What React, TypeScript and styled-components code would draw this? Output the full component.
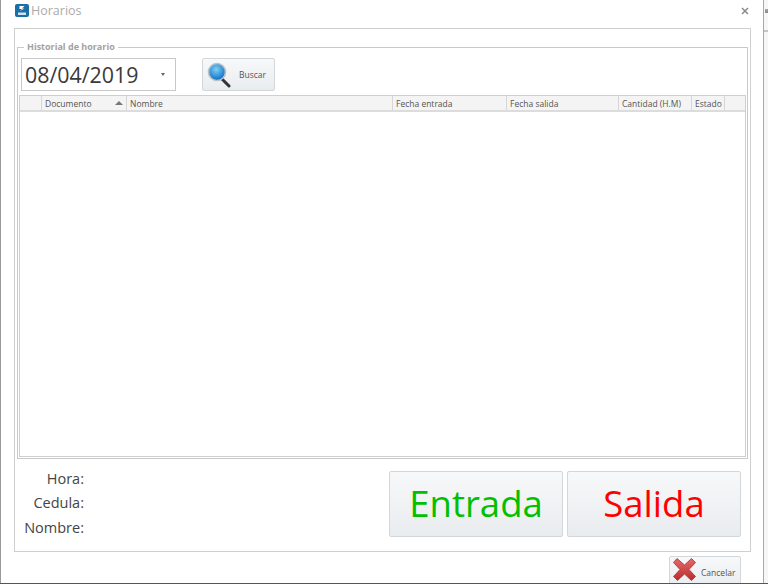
import React from "react";
import styled, { createGlobalStyle } from "styled-components";

const Global = createGlobalStyle`
  html, body { margin: 0; padding: 0; background: #fff; }
  body { font-family: "Open Sans", "Liberation Sans", sans-serif; }
  #root { width: 768px; height: 584px; overflow: hidden; }
`;

const Screen = styled.div`
  width: 768px;
  height: 584px;
  display: flex;
  background: #f6f6f6;
  border-bottom: 1px solid #555;
  box-sizing: border-box;
`;
const Win = styled.div`
  width: 764px;
  height: 583px;
  flex: none;
  box-sizing: border-box;
  background: #fff;
  border-left: 1px solid #9a9a9a;
  border-right: 1px solid #a8a8a8;
  display: flex;
  flex-direction: column;
  padding: 0 10px 0 13px;
  overflow: hidden;
`;
const Side = styled.div`
  flex: 1;
  display: flex;
  flex-direction: column;
  padding-top: 9px;
  gap: 17px;
`;
const SideGlyph = styled.span`
  display: block;
  width: 3px;
  height: 4px;
  margin-left: 1px;
  background: linear-gradient(#d9a23c, #5f8fc0);
`;
const SideLine = styled.span`
  display: block;
  height: 2px;
  background: #c4c4c4;
`;
const TitleBar = styled.div`
  height: 28px;
  flex: none;
  display: flex;
  align-items: center;
  gap: 2px;
  padding: 0 0 7px 1px;
  box-sizing: border-box;
`;
const Title = styled.span`
  font-family: "Open Sans", sans-serif;
  font-size: 12.5px;
  color: #ababab;
  flex: 1;
`;
const Close = styled.svg`
  width: 8px;
  height: 8px;
  margin-right: 4px;
`;
const Panel = styled.div`
  width: 737px;
  height: 524px;
  flex: none;
  box-sizing: border-box;
  border: 1px solid #cfcfcf;
  padding: 13px 2px 0 2px;
  display: flex;
  flex-direction: column;
`;
const Group = styled.fieldset`
  margin: 0;
  padding: 6px 0 0 3px;
  width: 731px;
  height: 417px;
  flex: none;
  box-sizing: border-box;
  border: 1px solid #c9c9c9;
  display: flex;
  flex-direction: column;
  min-width: 0;
`;
const Legend = styled.legend`
  margin-left: 3px;
  padding: 0 3px;
  font-family: "Open Sans", sans-serif;
  font-size: 9px;
  font-weight: 700;
  line-height: 10px;
  color: #a2a2a2;
`;
const SearchRow = styled.div`
  display: flex;
  align-items: flex-start;
  height: 37px;
  flex: none;
`;
const DateBox = styled.div`
  width: 155px;
  height: 33px;
  box-sizing: border-box;
  border: 1px solid #c8c8c8;
  display: flex;
  align-items: center;
  justify-content: space-between;
  padding: 0 10px 1px 3px;
  font-family: "Open Sans", sans-serif;
  font-size: 21.4px;
  color: #3a3a3a;
`;
const Caret = styled.span`
  width: 0;
  height: 0;
  border-left: 2.5px solid transparent;
  border-right: 2.5px solid transparent;
  border-top: 3px solid #666;
`;
const Btn = styled.button<{ $w: number; $h: number }>`
  width: ${(p) => p.$w}px;
  height: ${(p) => p.$h}px;
  box-sizing: border-box;
  flex: none;
  border: 1px solid #d4d7da;
  border-radius: 2px;
  background: linear-gradient(#f7f8f9, #e9ecef);
  padding: 0;
  display: flex;
  align-items: center;
  cursor: default;
`;
const SearchBtn = styled(Btn)`
  margin-left: 26px;
  gap: 8px;
  padding-left: 4px;
`;
const BtnLabel = styled.span`
  font-family: "Open Sans", sans-serif;
  font-size: 8.5px;
  color: #555;
`;
const Grid = styled.div`
  width: 727px;
  height: 362px;
  flex: none;
  margin-left: -2px;
  box-sizing: border-box;
  border: 1px solid #cfcfcf;
  display: flex;
  flex-direction: column;
  background: #fff;
`;
const HeaderRow = styled.div`
  height: 16px;
  flex: none;
  box-sizing: border-box;
  display: flex;
  background: #f4f4f4;
  border-bottom: 2px solid #dcdcdc;
`;
const HeaderCell = styled.div<{ $w: number }>`
  width: ${(p) => p.$w}px;
  flex: none;
  box-sizing: border-box;
  border-right: 1px solid #d6d6d6;
  padding-left: 3px;
  display: flex;
  align-items: center;
  justify-content: space-between;
  font-family: "Open Sans", sans-serif;
  font-size: 8.5px;
  color: #555;
  white-space: nowrap;
`;
const SortUp = styled.span`
  width: 0;
  height: 0;
  margin-right: 3px;
  border-left: 4px solid transparent;
  border-right: 4px solid transparent;
  border-bottom: 4px solid #777;
`;
const Bottom = styled.div`
  display: flex;
  flex: 1;
  padding: 7px 0 0 0;
`;
const Labels = styled.div`
  width: 67px;
  display: grid;
  grid-auto-rows: 24.5px;
  justify-items: end;
  align-items: center;
  flex: none;
`;
const Label = styled.div`
  font-family: "Open Sans", sans-serif;
  font-size: 14.5px;
  color: #444;
`;
const Actions = styled.div`
  margin: 5px 0 0 305px;
  display: flex;
  gap: 4px;
`;
const BigBtn = styled(Btn)<{ $c: string }>`
  justify-content: center;
  padding-bottom: 3px;
  font-family: "Open Sans", sans-serif;
  font-size: 36.5px;
  color: ${(p) => p.$c};
`;
const Footer = styled.div`
  display: flex;
  justify-content: flex-end;
  padding: 4px 12px 0 0;
`;
const CancelBtn = styled(Btn)`
  gap: 4px;
  padding-left: 2px;
  align-self: flex-start;
`;
const CancelIcon = styled.svg`
  margin-top: -6px;
  flex: none;
`;

const cols: [string, number][] = [
  ["Nombre", 266],
  ["Fecha entrada", 114],
  ["Fecha salida", 112],
  ["Cantidad (H.M)", 73],
  ["Estado", 33],
];

export default function App() {
  return (
    <Screen>
      <Global />
      <Win>
        <TitleBar>
          <svg width="14" height="13" viewBox="0 0 14 13">
            <rect width="14" height="13" rx="2" fill="#1c6ea4" />
            <path d="M4.5 2h5L7 4.5h2.500L5 7l2-2H4.500z" fill="#fff" />
            <rect x="3" y="8.500" width="8" height="2.500" fill="#cfe2ef" />
          </svg>
          <Title>Horarios</Title>
          <Close viewBox="0 0 8 8">
            <path d="M1 1l6 6M7 1L1 7" stroke="#8a8a8a" strokeWidth="1.500" />
          </Close>
        </TitleBar>
        <Panel>
          <Group>
            <Legend>Historial de horario</Legend>
            <SearchRow>
              <DateBox>
                08/04/2019
                <Caret />
              </DateBox>
              <SearchBtn $w={73} $h={33}>
                <svg width="24" height="28" viewBox="0 0 24 28">
                  <defs>
                    <radialGradient id="lens" cx="45%" cy="35%" r="60%">
                      <stop offset="0" stopColor="#7fd0f5" />
                      <stop offset="1" stopColor="#1273c9" />
                    </radialGradient>
                  </defs>
                  <path d="M15 18l7 7" stroke="#333" strokeWidth="3" strokeLinecap="round" />
                  <circle cx="10" cy="11" r="8.500" fill="url(#lens)" stroke="#b9c2c9" strokeWidth="1.600" />
                </svg>
                <BtnLabel>Buscar</BtnLabel>
              </SearchBtn>
            </SearchRow>
            <Grid>
              <HeaderRow>
                <HeaderCell $w={22} />
                <HeaderCell $w={85}>
                  Documento
                  <SortUp />
                </HeaderCell>
                {cols.map(([n, w]) => (
                  <HeaderCell key={n} $w={w}>
                    {n}
                  </HeaderCell>
                ))}
              </HeaderRow>
            </Grid>
          </Group>
          <Bottom>
            <Labels>
              <Label>Hora:</Label>
              <Label>Cedula:</Label>
              <Label>Nombre:</Label>
            </Labels>
            <Actions>
              <BigBtn $w={174} $h={66} $c="#00c000">Entrada</BigBtn>
              <BigBtn $w={174} $h={66} $c="#ff0000">Salida</BigBtn>
            </Actions>
          </Bottom>
        </Panel>
        <Footer>
          <CancelBtn $w={72} $h={33}>
            <CancelIcon width="25" height="25" viewBox="0 0 25 25">
              <defs>
                <linearGradient id="cx" x1="0" y1="0" x2="0" y2="1">
                  <stop offset="0" stopColor="#e56a6a" />
                  <stop offset="1" stopColor="#b92c2c" />
                </linearGradient>
              </defs>
              <path
                d="M1.500 5.500L5 1.500 12.500 8l7-6.500 4 4L17 12.500l6.500 7-4 4L12.500 17 5.500 23.500l-4-4L8 12.500z"
                fill="url(#cx)"
                stroke="#a82f2f"
                strokeWidth="0.800"
                strokeLinejoin="round"
              />
            </CancelIcon>
            <BtnLabel>Cancelar</BtnLabel>
          </CancelBtn>
        </Footer>
      </Win>
      <Side>
        <SideGlyph />
        <SideLine />
      </Side>
    </Screen>
  );
}
